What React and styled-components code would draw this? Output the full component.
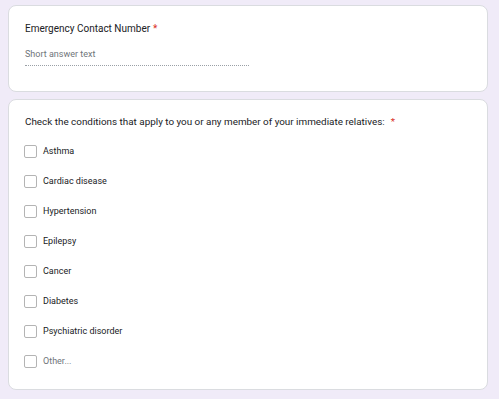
import React from "react";
import styled, { createGlobalStyle } from "styled-components";

const Global = createGlobalStyle`
  html, body { margin: 0; padding: 0; background: #f0ebf8; }
  body { font-family: Roboto, "Noto Sans", Arial, sans-serif; color: #202124; }
`;

const Page = styled.div`
  display: flex;
  flex-direction: column;
  gap: 7px;
  padding: 5px 0 0 8px;
  width: 480px;
`;

const Card = styled.div`
  background: #fff;
  border: 1px solid #dadce0;
  border-radius: 8px;
  padding: ${(p) => p.$pad};
  display: flex;
  flex-direction: column;
`;

const Title = styled.div`
  font-size: ${(p) => p.$size || 10}px;
  line-height: 16px;
  color: #202124;
`;

const Star = styled.span`
  color: #d93025;
  margin-left: ${(p) => p.$gap || 3}px;
`;

const ShortAnswer = styled.div`
  margin-top: 10px;
  width: 224px;
  font-size: 9px;
  line-height: 14px;
  color: #70757a;
  padding-bottom: 4px;
  border-bottom: 1px dotted #9aa0a6;
`;

const Options = styled.div`
  display: flex;
  flex-direction: column;
  margin-top: 6px;
`;

const Row = styled.label`
  display: flex;
  align-items: center;
  height: 30px;
  gap: 6px;
  font-size: 9px;
  color: ${(p) => (p.$muted ? "#70757a" : "#202124")};
`;

const Box = styled.span`
  box-sizing: border-box;
  width: 13px;
  height: 13px;
  margin-left: -1px;
  border: 1.5px solid #b4b4b4;
  border-radius: 2px;
  flex: none;
`;

const options = [
  "Asthma",
  "Cardiac disease",
  "Hypertension",
  "Epilepsy",
  "Cancer",
  "Diabetes",
  "Psychiatric disorder",
];

export default function App() {
  return (
    <>
      <Global />
      <Page>
        <Card $pad="15px 16px 25px">
          <Title>
            Emergency Contact Number<Star>*</Star>
          </Title>
          <ShortAnswer>Short answer text</ShortAnswer>
        </Card>
        <Card $pad="14px 16px 13px">
          <Title $size={9.9}>
            Check the conditions that apply to you or any member of your immediate relatives:
            <Star $gap={6}>*</Star>
          </Title>
          <Options>
            {options.map((o) => (
              <Row key={o}>
                <Box />
                {o}
              </Row>
            ))}
            <Row $muted>
              <Box />
              Other...
            </Row>
          </Options>
        </Card>
      </Page>
    </>
  );
}
